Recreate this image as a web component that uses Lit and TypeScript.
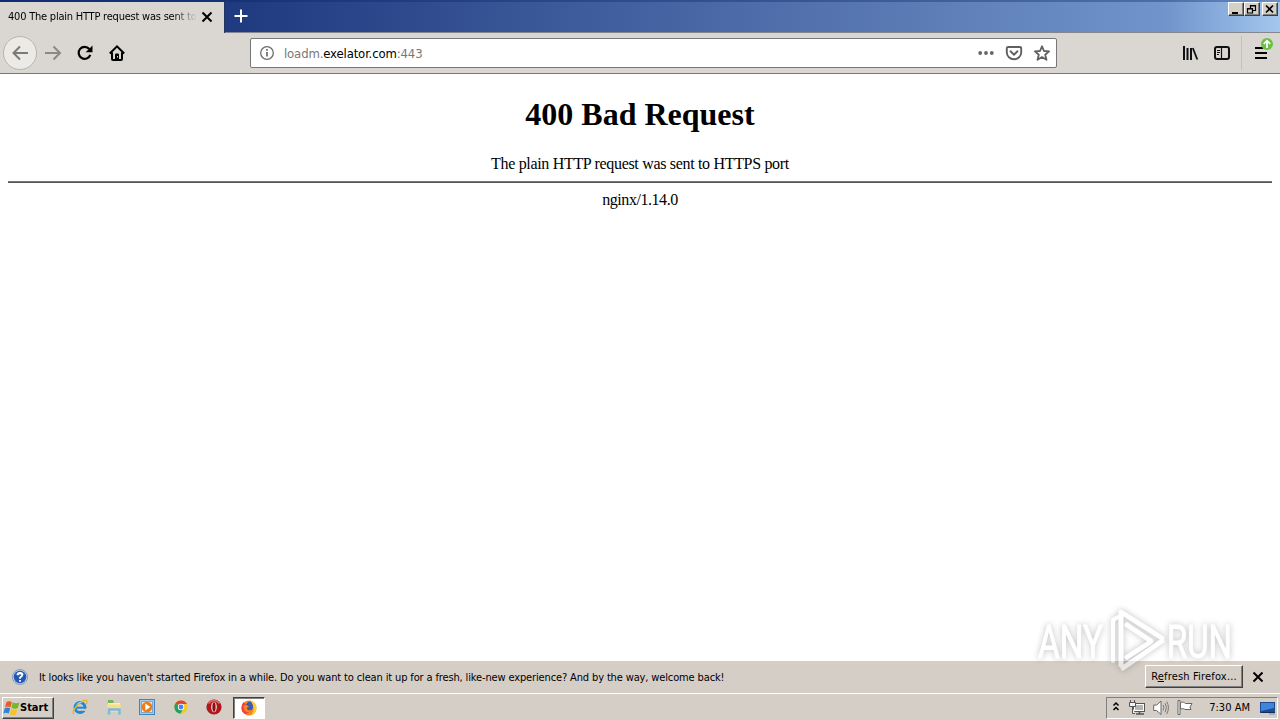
import { LitElement, html, svg, css } from "lit";
import { customElement, property } from "lit/decorators.js";

const quickLaunch = [
  // Internet Explorer
  svg`<circle cx="8" cy="8.500" r="5" fill="none" stroke="#1f86d8" stroke-width="3" />
    <path d="M3.500 8.700h9.500" stroke="#1f86d8" stroke-width="2" />
    <path d="M10 10.800h5" stroke="#d5cec7" stroke-width="2" />
    <path d="M2 15C-1 13 5 5 11 2c4-1.800 4.500.3 3.500 3" fill="none" stroke="#e9b62c" stroke-width="1.600" />
    <path d="M4.500 5.500A5 5 0 0 1 9 3.400" fill="none" stroke="#8ed0fa" stroke-width="1" />`,
  // Explorer
  svg`<path d="M1 3h5l1 1.500h7V13H1z" fill="#e8c65c" />
    <path d="M2 1h5l1 3H2z" fill="#74b45a" />
    <path d="M2 4h12v5H2z" fill="#fff0a8" />
    <path d="M1 5.500h14v7.500H1z" fill="#f4de8a" />
    <path d="M3 15.500V10.500h10.500v5" fill="none" stroke="#7db9e2" stroke-width="2.600" />`,
  // Media Player
  svg`<rect x=".5" y=".5" width="15" height="15" fill="#a9cbe9" stroke="#4682bb" />
    <rect x="2.500" y="2.500" width="11" height="11" fill="#d8e9f8" stroke="#77a8d2" />
    <circle cx="8" cy="8" r="5.300" fill="#ef7d13" />
    <path d="M6.300 4.600v6.800L11.400 8z" fill="#fff" />`,
  // Chrome
  svg`<circle cx="8" cy="8" r="6.700" fill="#f7c92d" />
    <path d="M8 8 2.300 4.600A6.700 6.700 0 0 1 13.900 5H8z" fill="#dc4437" />
    <path d="M2.300 4.600A6.700 6.700 0 0 0 7.400 14.700L10.500 9.500 8 8z" fill="#22a15d" />
    <circle cx="8" cy="8" r="3.200" fill="#fff" /><circle cx="8" cy="8" r="2.400" fill="#4386ed" />`,
  // Opera
  svg`<circle cx="8" cy="8" r="7.600" fill="#b0161b" />
    <path d="M2.500 4.500a6.500 6.500 0 0 1 11 0" fill="none" stroke="#dd6d68" stroke-width="1.500" />
    <ellipse cx="8" cy="8" rx="2.800" ry="5.300" fill="#f0e8e5" />
    <ellipse cx="8" cy="8" rx="1.600" ry="4.700" fill="#8c0d11" />`,
];

const firefox = svg`<circle cx="8" cy="8" r="7.500" fill="#f9822a" />
  <path d="M9 .5c4 .8 6.500 3.500 6.500 7.500A7.500 7.500 0 0 1 10 15.300C14 10 13 5 9 .5z" fill="#ffcf2e" />
  <path d="M.5 8.500C.5 5 1.500 3.500 2.500 2L5 4.500l2 1-1.500 3.500 4 2.500-5 2.500q-4-2-4-5.500z" fill="#f04040" />
  <path d="M5 5Q6.500 1 9.500 1.500q3 3 2.500 6.500-1 3-4 2.800Q5 10 5 7z" fill="#3b5bb5" />
  <path d="M2.500 5.500 5 5l3 1.200-2 1.500v1.600c1.500 1.600 3 1.200 4.500.4-1 3-5.500 3-7.200.6z" fill="#ff8420" />`;

const tray = [
  // network
  svg`<rect x="4.500" y="3.500" width="11" height="8" fill="#b4b4b4" stroke="#555" />
    <rect x="5.500" y="4.500" width="9" height="6" fill="none" stroke="#fff" />
    <path d="M7 14h8M10.500 12v2" stroke="#555" stroke-width="1.600" />
    <path d="M1.500 0v3M5.500 0v3M.5 2.500h6v4h-6zM3.500 7v6.500H6" fill="#f5f5f5" stroke="#555" />`,
  // speaker
  svg`<path d="M.7 5h3L8 1v13.500L3.700 10.500h-3z" fill="#fff" stroke="#666" />
    <path d="M10 5q1.800 2.700 0 5.400M12 3.200q3 4.500 0 9M13.700 1.500q3.500 6.200 0 12.500" fill="none" stroke="#777" />`,
  // action center flag
  svg`<path d="M3.500 2.500c2-1 4 0 5 1h6.500l-2 3.500 1 2.500h-6c-1-1-2-1-4.500-.5z" fill="#fff" stroke="#666" />
    <path d="M1 .5h2v14H1z" fill="#fff" stroke="#666" />`,
];

@customElement("ui-icon")
export class UiIcon extends LitElement {
  @property({ attribute: false }) art: unknown;

  static styles = css`
    :host {
      display: block;
      flex: none;
      width: 16px;
      height: 16px;
    }
    svg {
      display: block;
      overflow: visible;
    }
  `;

  render() {
    return html`<svg width="16" height="16" viewBox="0 0 16 16" fill="none">${this.art}</svg>`;
  }
}

const icons = {
  close: svg`<path d="M3.500 3.500l9 9M12.500 3.500l-9 9" stroke="#000" stroke-width="2" />`,
  plus: svg`<path d="M8 1.500v13M1.500 8h13" stroke="#fff" stroke-width="2" />`,
  back: svg`<path d="M16 8H1.500M8 1.500 1.500 8 8 14.500" stroke="#7b7976" stroke-width="2" />`,
  forward: svg`<path d="M0 8h14.500M8.500 1.500 15 8l-6.500 6.500" stroke="#8b8985" stroke-width="2" />`,
  reload: svg`<path d="M13.300 9.800A6 6 0 1 1 12.300 4" stroke="#000" stroke-width="2.200" />
    <path d="M15.500.5v6.800H8.700z" fill="#000" />`,
  home: svg`<path d="M.8 8.500 8 1.300l7.200 7.200M3 7.500V14q0 1 1 1h8q1 0 1-1V7.500" stroke="#000" stroke-width="2" />
    <path d="M6 14V9.500q0-1 1-1h2q1 0 1 1V14z" fill="#000" /><path d="M8.500 11v1.500" stroke="#ddd" />`,
  info: svg`<circle cx="8" cy="8" r="6.300" stroke="#6b6b6b" stroke-width="1.300" />
    <path d="M8 7v4.500M8 4v1.800" stroke="#6b6b6b" stroke-width="1.700" />`,
  dots: svg`<g fill="#666"><circle cx="2.200" cy="8" r="1.900" /><circle cx="8" cy="8" r="1.900" /><circle cx="13.800" cy="8" r="1.900" /></g>`,
  pocket: svg`<path d="M2 2h12q1.200 0 1.200 1.200V7.500a7.200 6.700 0 0 1-14.400 0V3.200Q.8 2 2 2z" stroke="#606060" stroke-width="1.900" />
    <path d="M4.500 6.300 8 9.700l3.500-3.400" stroke="#606060" stroke-width="1.900" stroke-linecap="round" />`,
  star: svg`<path d="m8 1.300 2 4.700 5.100.4-3.900 3.400 1.300 5L8 12.100l-4.500 2.700 1.300-5L.9 6.400 6 6z" stroke="#606060" stroke-width="1.800" stroke-linejoin="round" />`,
  library: svg`<path d="M2 1v14M5.500 3v12M9 3v12" stroke="#111" stroke-width="2" /><path d="m10.800 3 4.500 11.500" stroke="#111" stroke-width="1.800" />`,
  sidebar: svg`<rect x="1" y="2" width="14" height="12" rx="2" stroke="#111" stroke-width="2" />
    <path d="M7.500 2v12" stroke="#111" stroke-width="1.200" /><path d="M3 5.500h3M3 7.500h3M3 9.500h2" stroke="#111" />`,
  menu: svg`<path d="M2 3h12M2 8h12M2 13h12" stroke="#000" stroke-width="2" />`,
  update: svg`<circle cx="8" cy="8" r="6" fill="#6bbf47" /><path d="M8 12V5M4.800 8 8 4.700 11.200 8" stroke="#fff" stroke-width="1.700" />`,
  help: svg`<circle cx="8" cy="8" r="7.500" fill="#b8cce8" stroke="#8a9db9" /><circle cx="8" cy="8" r="6.200" fill="#2456b5" />
    <path d="M3.500 5.500Q8 0 12.500 5.500 8 7 3.500 5.500z" fill="#6594d5" />
    <path d="M5.700 6.200q0-2.200 2.300-2.200t2.300 1.900Q10.300 7.200 8 8.500v1.200M8 11v1.800" stroke="#fff" stroke-width="1.800" />`,
  windows: svg`<path d="M2.500 2Q5 .3 7.900 2L6.500 7.200Q3.800 5.600 1 7.200z" fill="#ea5b24" />
    <path d="M8.700 2.300q3 1.700 6.800.3L13.800 8q-3.300 1.500-6.400-.3z" fill="#74b72b" />
    <path d="M.8 8.200q2.700-1.600 5.400 0l-1.500 5.300q-2.600-1.600-5.400 0z" fill="#2f83d6" />
    <path d="M7.100 8.700q3 1.700 6.400.3L12 14.500q-3.200 1.500-6.300-.3z" fill="#f8c22a" />`,
  chevrons: svg`<path d="m5.500 5.500 2.500-2.500 2.500 2.500M5.500 10l2.500-2.500 2.500 2.500" stroke="#000" stroke-width="1.500" />`,
  desktop: svg`<rect x="0" y="2" width="15" height="11" fill="#1d4a93" /><path d="M1 3h13v5L1 11z" fill="#3f86d9" />
    <path d="M1 12.500h14" stroke="#122c5e" /><path d="M9 14h6" stroke="#6f8fc0" />`,
  minimize: svg`<path d="M4 11h6" stroke="#000" stroke-width="2" />`,
  restore: svg`<path d="M6.500 6V3.500h5v5H9M6 4h6M3.500 6.500h5v4.500h-5zM3 7h6" stroke="#000" stroke-width="1.200" />`,
  cross: svg`<path d="m4 3.500 7 7M11 3.500l-7 7" stroke="#000" stroke-width="1.700" />`,
};

const icon = (art: unknown) => html`<ui-icon .art=${art}></ui-icon>`;

@customElement("app-root")
export class AppRoot extends LitElement {
  static styles = css`
    :host {
      display: flex;
      flex-direction: column;
      position: relative;
      width: 1280px;
      height: 720px;
      overflow: hidden;
      background: #fff;
      color: #000;
      font: 11px/14px "DejaVu Sans Condensed", "DejaVu Sans", sans-serif;
      font-stretch: condensed;
      white-space: nowrap;
    }
    .titlebar {
      display: flex;
      box-sizing: border-box;
      height: 33px;
      padding-top: 2px;
      border-bottom: 1px solid #85878c;
      background: linear-gradient(90deg, #16317a, #203b80 19%, #5c7cb6 72%, #7094cb 91%, #a3c7ee);
      box-shadow: inset 0 2px 0 rgba(10, 36, 106, 0.35);
    }
    .tab {
      display: flex;
      align-items: center;
      box-sizing: border-box;
      width: 225px;
      height: 31px;
      padding: 0 9px 2px 8px;
      background: #dad7d3;
      border-right: 1px solid #22345f;
    }
    .tab-title {
      width: 189px;
      margin-right: 2px;
      letter-spacing: -0.22px;
      mask-image: linear-gradient(90deg, #000 165px, transparent);
    }
    .new-tab {
      padding: 6px 8px;
    }
    .window-buttons {
      display: flex;
      margin-left: auto;
      padding-right: 2px;
    }
    .window-button {
      box-sizing: border-box;
      width: 16px;
      height: 14px;
      overflow: hidden;
      background: #d4d0c8;
      border: 1px solid;
      border-color: #fff #404040 #404040 #fff;
      box-shadow: inset -1px -1px #808080;
    }
    .window-button ui-icon {
      margin: -1px;
    }
    .window-button:last-child {
      margin-left: 2px;
    }
    .toolbar {
      display: flex;
      align-items: center;
      box-sizing: border-box;
      height: 41px;
      background: #dad7d3;
      border-bottom: 1px solid #77777a;
    }
    .back {
      display: grid;
      place-items: center;
      box-sizing: border-box;
      width: 34px;
      height: 34px;
      margin-left: 3px;
      border: 1px solid #b8b5b1;
      border-radius: 50%;
      background: #eceae7;
    }
    .nav {
      display: flex;
      gap: 16px;
      padding-left: 8px;
    }
    .urlbar {
      display: flex;
      align-items: center;
      box-sizing: border-box;
      width: 807px;
      height: 30px;
      margin-left: 125px;
      padding: 0 6px 0 8px;
      background: #fff;
      border: 1px solid #77777a;
      border-radius: 2px;
    }
    .url {
      margin: 1px 0 0 9px;
      font-size: 13px;
      letter-spacing: -0.14px;
      color: #777;
    }
    .host {
      color: #000;
    }
    .page-actions {
      display: flex;
      gap: 12px;
      margin-left: auto;
    }
    .tools {
      display: flex;
      align-items: center;
      gap: 16px;
      margin-left: 125px;
    }
    .menu {
      position: relative;
      padding: 9px 0 9px 11px;
      margin-left: -5px;
      border-left: 1px solid #c3c0bc;
    }
    .badge {
      position: absolute;
      top: 0;
      right: -6px;
    }
    .page {
      flex: 1;
      padding: 0 8px;
      font: 16px/18px "Liberation Serif", "Times New Roman", serif;
      text-align: center;
    }
    .heading {
      margin: 22px 0;
      font-size: 32px;
      line-height: 37px;
      font-weight: bold;
    }
    .message {
      letter-spacing: -0.32px;
    }
    .server {
      letter-spacing: -0.45px;
    }
    .rule {
      height: 1px;
      margin: 8px 0;
      border: solid #777;
      border-width: 1px 0 0;
      background: #555;
    }
    .notice {
      display: flex;
      align-items: center;
      height: 32px;
      padding: 0 14px 0 12px;
      background: #d5cec7;
    }
    .notice-text {
      margin: 1px 0 0 11px;
      letter-spacing: -0.136px;
    }
    .refresh {
      box-sizing: border-box;
      width: 98px;
      height: 23px;
      margin: 0 7px 2px auto;
      padding: 4px 0 0;
      text-align: center;
      letter-spacing: 0.18px;
      border: 1px solid;
      border-color: #fff #404040 #404040 #fff;
      box-shadow: inset -1px -1px #808080;
    }
    .taskbar {
      display: flex;
      align-items: center;
      box-sizing: border-box;
      height: 27px;
      padding: 1px 2px 0;
      background: #d5cec7;
      border-top: 1px solid #fff;
    }
    .start {
      display: flex;
      align-items: center;
      box-sizing: border-box;
      width: 52px;
      height: 22px;
      padding: 0 1px;
      font-weight: bold;
      letter-spacing: 0;
      border: 1px solid;
      border-color: #fff #404040 #404040 #fff;
      box-shadow: inset -1px -1px #808080;
    }
    .quick {
      display: flex;
      gap: 17.6px;
      margin: 0 0 1px 18px;
    }
    .active {
      display: grid;
      place-items: center;
      box-sizing: border-box;
      width: 32px;
      height: 22px;
      margin-left: 10.6px;
      background: #fff;
      border: 1px solid;
      border-color: #404040 #fff #fff #404040;
      box-shadow: inset 1px 1px #808080;
    }
    .tray {
      display: flex;
      align-items: center;
      box-sizing: border-box;
      width: 172px;
      height: 22px;
      margin-left: auto;
      padding: 0 1px;
      border: 1px solid;
      border-color: #808080 #fff #fff #808080;
    }
    .tray-icons {
      display: flex;
      gap: 8px;
      margin-left: 5px;
    }
    .clock {
      margin: 0 10px 0 auto;
      letter-spacing: 0.02px;
    }
    .watermark {
      position: absolute;
      left: 1030px;
      top: 600px;
      overflow: visible;
      filter: drop-shadow(0 0 3px rgba(0, 0, 0, 0.5));
      opacity: 0.5;
    }
    .watermark-text {
      font: 47px Roboto, sans-serif;
      fill: #fff;
    }
  `;

  render() {
    return html`
      <div class="titlebar">
        <div class="tab">
          <div class="tab-title">400 The plain HTTP request was sent to</div>
          ${icon(icons.close)}
        </div>
        <div class="new-tab">${icon(icons.plus)}</div>
        <div class="window-buttons">
          <div class="window-button">${icon(icons.minimize)}</div>
          <div class="window-button">${icon(icons.restore)}</div>
          <div class="window-button">${icon(icons.cross)}</div>
        </div>
      </div>
      <div class="toolbar">
        <div class="back">${icon(icons.back)}</div>
        <div class="nav">${[icons.forward, icons.reload, icons.home].map(icon)}</div>
        <div class="urlbar">
          ${icon(icons.info)}
          <div class="url">loadm.<span class="host">exelator.com</span>:443</div>
          <div class="page-actions">${[icons.dots, icons.pocket, icons.star].map(icon)}</div>
        </div>
        <div class="tools">
          ${[icons.library, icons.sidebar].map(icon)}
          <div class="menu">
            ${icon(icons.menu)}
            <div class="badge">${icon(icons.update)}</div>
          </div>
        </div>
      </div>
      <div class="page">
        <h1 class="heading">400 Bad Request</h1>
        <div class="message">The plain HTTP request was sent to HTTPS port</div>
        <hr class="rule" />
        <div class="server">nginx/1.14.0</div>
      </div>
      <div class="notice">
        ${icon(icons.help)}
        <div class="notice-text">It looks like you haven't started Firefox in a while. Do you want to clean it up for a fresh, like-new experience? And by the way, welcome back!</div>
        <div class="refresh">R<u>e</u>fresh Firefox...</div>
        ${icon(icons.close)}
      </div>
      <div class="taskbar">
        <div class="start">${icon(icons.windows)}Start</div>
        <div class="quick">${quickLaunch.map(icon)}</div>
        <div class="active">${icon(firefox)}</div>
        <div class="tray">
          ${icon(icons.chevrons)}
          <div class="tray-icons">${tray.map(icon)}</div>
          <div class="clock">7:30 AM</div>
          ${icon(icons.desktop)}
        </div>
      </div>
      <svg class="watermark" width="210" height="80" viewBox="0 0 210 80" fill="none">
        <g stroke="#fff" stroke-linejoin="round" stroke-linecap="round">
          <text class="watermark-text" stroke-width="1" x="8" y="58" textLength="65" lengthAdjust="spacingAndGlyphs">ANY</text>
          <text class="watermark-text" stroke-width="1" x="137" y="58" textLength="65" lengthAdjust="spacingAndGlyphs">RUN</text>
          <path d="M83 61V20l5-3" stroke-width="4" />
          <path d="M91 65V12l41 26M97 25l24 16M132 41 93 68M97 57l22-14" stroke-width="5" />
        </g>
      </svg>
    `;
  }
}
